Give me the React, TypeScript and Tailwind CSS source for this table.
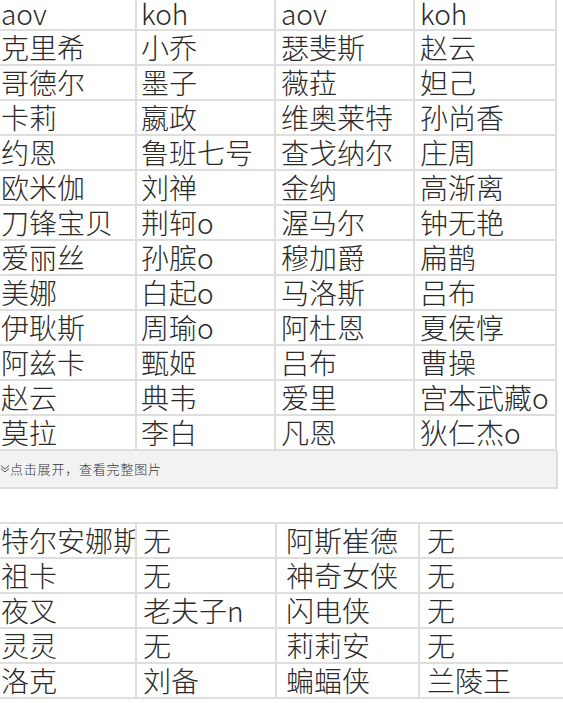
import React from "react";

const topRows: string[][] = [
  ["克里希", "小乔", "瑟斐斯", "赵云"],
  ["哥德尔", "墨子", "薇菈", "妲己"],
  ["卡莉", "嬴政", "维奥莱特", "孙尚香"],
  ["约恩", "鲁班七号", "查戈纳尔", "庄周"],
  ["欧米伽", "刘禅", "金纳", "高渐离"],
  ["刀锋宝贝", "荆轲o", "渥马尔", "钟无艳"],
  ["爱丽丝", "孙膑o", "穆加爵", "扁鹊"],
  ["美娜", "白起o", "马洛斯", "吕布"],
  ["伊耿斯", "周瑜o", "阿杜恩", "夏侯惇"],
  ["阿兹卡", "甄姬", "吕布", "曹操"],
  ["赵云", "典韦", "爱里", "宫本武藏o"],
  ["莫拉", "李白", "凡恩", "狄仁杰o"],
];

const bottomRows: string[][] = [
  ["特尔安娜斯", "无", "阿斯崔德", "无"],
  ["祖卡", "无", "神奇女侠", "无"],
  ["夜叉", "老夫子n", "闪电侠", "无"],
  ["灵灵", "无", "莉莉安", "无"],
  ["洛克", "刘备", "蝙蝠侠", "兰陵王"],
];

const font = {
  fontFamily: '"Noto Sans CJK SC", "Noto Sans", sans-serif',
};

const TopTable = () => {
  const widths = ["w-[137px]", "w-[139px]", "w-[139px]", "w-[142px]"];
  const pads = ["pl-[1px]", "pl-[4px]", "pl-[5px]", "pl-[5px]"];
  return (
    <div className="w-[557px] border-r-2 border-[#dedede]">
      <div className="flex h-[31px] border-b-2 border-[#dedede]">
        {["aov", "koh", "aov", "koh"].map((h, i) => (
          <div
            key={i}
            className={`${widths[i]} ${pads[i]} shrink-0 overflow-hidden whitespace-nowrap text-[28px] leading-[27px] ${i < 3 ? "border-r-2 border-[#dedede]" : ""}`}
          >
            {h}
          </div>
        ))}
      </div>
      {topRows.map((row, r) => (
        <div key={r} className="flex h-[35px] border-b-2 border-[#dedede]">
          {row.map((c, i) => (
            <div
              key={i}
              className={`${widths[i]} ${pads[i]} shrink-0 overflow-hidden whitespace-nowrap text-[28px] leading-[32px] ${i < 3 ? "border-r-2 border-[#dedede]" : ""}`}
            >
              {c}
            </div>
          ))}
        </div>
      ))}
    </div>
  );
};

const BottomTable = () => {
  const widths = ["w-[137px]", "w-[140px]", "w-[143px]", "flex-1"];
  const pads = ["pl-[1px]", "pl-[6px]", "pl-[9px]", "pl-[7px]"];
  return (
    <div className="w-full border-t-2 border-[#dedede]">
      {bottomRows.map((row, r) => (
        <div key={r} className="flex h-[35px] border-b-2 border-[#dedede]">
          {row.map((c, i) => (
            <div
              key={i}
              className={`${widths[i]} ${pads[i]} shrink-0 overflow-hidden whitespace-nowrap text-[28px] leading-[32px] ${i < 3 ? "border-r-2 border-[#dedede]" : ""}`}
            >
              {c}
            </div>
          ))}
        </div>
      ))}
    </div>
  );
};

const ExpandBar = () => (
  <div className="flex h-[38px] w-[558px] items-center border-b-2 border-r-2 border-[#dddddd] bg-[#f2f2f2]">
    <svg width="10" height="10" viewBox="0 0 10 10" className="shrink-0">
      <path d="M1 1.5 L5 5 L9 1.5" fill="none" stroke="#555" strokeWidth="1" />
      <path d="M1 4.5 L5 8 L9 4.5" fill="none" stroke="#555" strokeWidth="1" />
    </svg>
    <span className="text-[13px] tracking-[0.8px] text-[#333]">
      点击展开，查看完整图片
    </span>
  </div>
);

export default function App() {
  return (
    <div
      className="w-[563px] h-[703px] overflow-hidden bg-white font-light text-[#2a2a2a]"
      style={font}
    >
      <TopTable />
      <ExpandBar />
      <div className="h-[33px]" />
      <BottomTable />
    </div>
  );
}
